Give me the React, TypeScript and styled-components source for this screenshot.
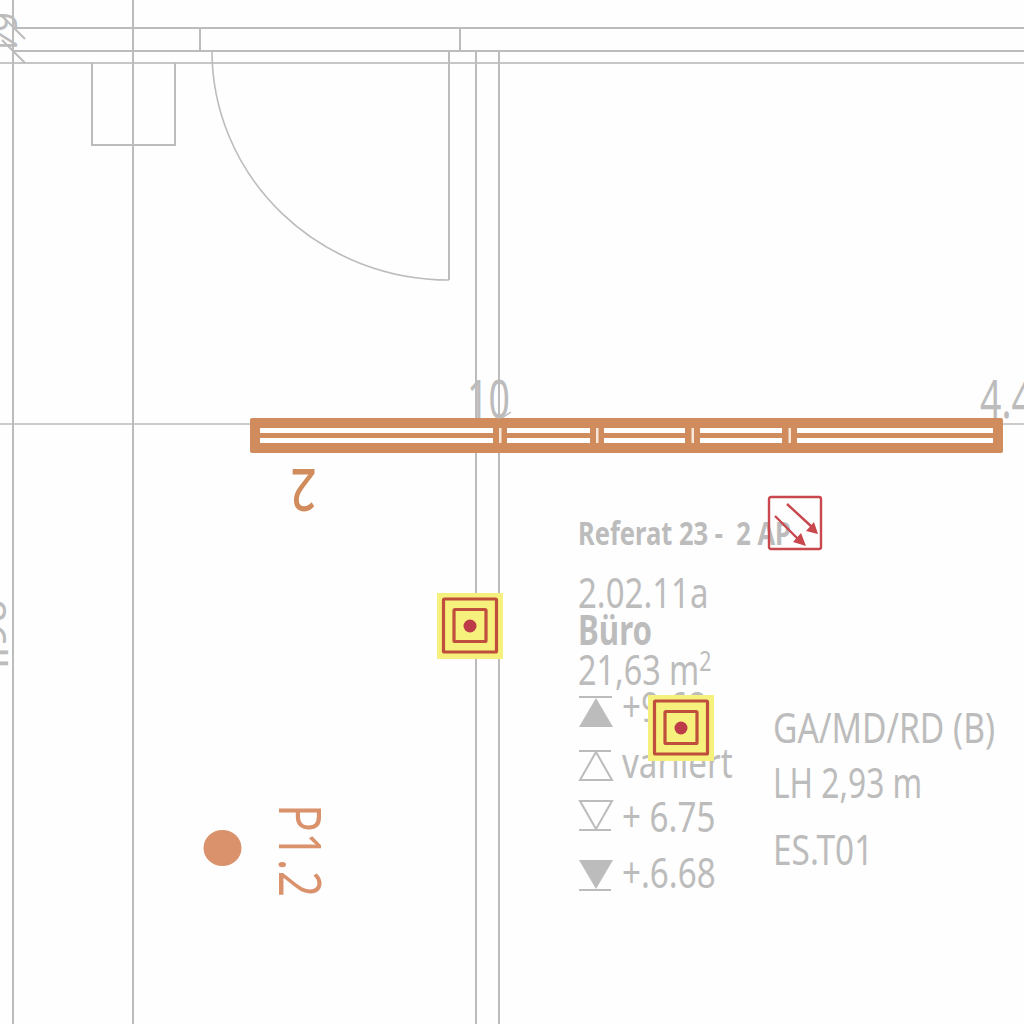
import React from "react";
import styled, { createGlobalStyle } from "styled-components";

const Global = createGlobalStyle`
  html, body { margin: 0; padding: 0; background: #fefefe; }
`;

const GREY = "#bcbcbc";
const ORANGE = "#d08c5c";
const TEXT_FONT = `"Noto Sans", "Open Sans", sans-serif`;

const Canvas = styled.main`
  position: relative;
  width: 1024px;
  height: 1024px;
  overflow: hidden;
  background: #fefefe;
`;

const Drawing = styled.svg`
  position: absolute;
  inset: 0;
`;

const DimensionLabel = styled.span<{ $x: number }>`
  position: absolute;
  left: ${(p) => p.$x}px;
  top: 372px;
  font-family: ${TEXT_FONT};
  font-size: 52px;
  line-height: 1;
  white-space: nowrap;
  color: ${GREY};
  transform-origin: 0 0;
  transform: scaleX(0.72);
`;

const WallLabel = styled.span<{ $x: number; $y: number; $size: number; $sx: number }>`
  position: absolute;
  left: ${(p) => p.$x}px;
  top: ${(p) => p.$y}px;
  font-family: ${TEXT_FONT};
  font-size: ${(p) => p.$size}px;
  line-height: 1;
  white-space: nowrap;
  color: ${GREY};
  transform-origin: 0 0;
  transform: rotate(90deg) scaleX(${(p) => p.$sx});
`;

const TurnedNumber = styled.span`
  position: absolute;
  left: 288px;
  top: 462px;
  width: 32px;
  text-align: center;
  font-family: ${TEXT_FONT};
  font-size: 58px;
  font-weight: 500;
  line-height: 1;
  color: ${ORANGE};
  transform: rotate(180deg) scaleX(0.78);
`;

const PointLabel = styled.span`
  position: absolute;
  left: 330px;
  top: 804px;
  font-family: "Open Sans", sans-serif;
  font-size: 58px;
  line-height: 1;
  white-space: nowrap;
  color: #d9926c;
  transform-origin: 0 0;
  transform: rotate(90deg) scaleX(0.8);
`;

/* Room stamp: the text block of the room, set in flow */
const RoomStamp = styled.section`
  position: absolute;
  left: 578px;
  top: 516px;
  display: flex;
  flex-direction: column;
  width: 200px;
`;

const StampLine = styled.div<{ $h: number; $size?: number; $sx?: number; $bold?: boolean }>`
  height: ${(p) => p.$h}px;
  font-family: ${TEXT_FONT};
  font-size: ${(p) => p.$size ?? 42}px;
  font-weight: ${(p) => (p.$bold ? 700 : 400)};
  line-height: 1;
  white-space: nowrap;
  color: ${GREY};
  transform-origin: 0 0;
  transform: scaleX(${(p) => p.$sx ?? 0.79});
`;

const Superscript = styled.sup`
  font-size: 0.66em;
  line-height: 0;
  vertical-align: 0.5em;
`;

const LevelRow = styled.div<{ $h: number }>`
  display: flex;
  align-items: flex-start;
  gap: 8px;
  height: ${(p) => p.$h}px;
`;

const LevelIcon = styled.svg<{ $drop: number }>`
  flex: none;
  margin-top: ${(p) => p.$drop}px;
`;

const LevelText = styled.span`
  font-family: ${TEXT_FONT};
  font-size: 42px;
  line-height: 1;
  white-space: nowrap;
  color: ${GREY};
  transform-origin: 0 0;
  transform: scaleX(0.79);
`;

const RoomUse = styled.section`
  position: absolute;
  left: 773px;
  top: 706px;
  display: flex;
  flex-direction: column;
`;

const MarkerBox = styled.svg<{ $x: number; $y: number }>`
  position: absolute;
  left: ${(p) => p.$x}px;
  top: ${(p) => p.$y}px;
`;

const Marker = ({ x, y }: { x: number; y: number }) => (
  <MarkerBox $x={x} $y={y} width={66} height={66} viewBox="0 0 66 66">
    <rect width="66" height="66" fill="#f6f07c" />
    <rect x="6.5" y="6" width="53" height="53" rx="1" fill="none" stroke="#bf4e3d" strokeWidth="3.2" />
    <rect x="17" y="16.5" width="32" height="32" rx="1" fill="none" stroke="#bf4e3d" strokeWidth="3.2" />
    <circle cx="33" cy="33" r="6.5" fill="#bd3a48" />
  </MarkerBox>
);

const ExhaustSign = () => (
  <MarkerBox $x={767} $y={495} width={56} height={56} viewBox="0 0 56 56">
    <g fill="none" stroke="#c8484e" strokeWidth="2.4">
      <rect x="2" y="2" width="52" height="52" rx="2" />
      <path d="M20 9L45 32M8 21L31 44" />
    </g>
    <path d="M51 39L39 36L47 27ZM39 51L26 47L34 38Z" fill="#c8484e" />
  </MarkerBox>
);

const levelShapes = {
  filledUp: (
    <>
      <path d="M1 1H34" stroke={GREY} strokeWidth="2" />
      <path d="M18 2L35 31H1Z" fill={GREY} />
    </>
  ),
  hollowUp: (
    <>
      <path d="M1 1H33" stroke={GREY} strokeWidth="2" />
      <path d="M18 2L34 30H2Z" fill="none" stroke={GREY} strokeWidth="2" />
    </>
  ),
  hollowDown: (
    <>
      <path d="M2 2H34L18 30Z" fill="none" stroke={GREY} strokeWidth="2" />
      <path d="M1 31H33" stroke={GREY} strokeWidth="2" />
    </>
  ),
  filledDown: (
    <>
      <path d="M1 1H35L18 30Z" fill={GREY} />
      <path d="M1 31H33" stroke={GREY} strokeWidth="2" />
    </>
  ),
};

const Level = ({ h, drop, shape, children }: { h: number; drop: number; shape: keyof typeof levelShapes; children: React.ReactNode }) => (
  <LevelRow $h={h}>
    <LevelIcon $drop={drop} width={36} height={33} viewBox="0 0 36 33">
      {levelShapes[shape]}
    </LevelIcon>
    <LevelText>{children}</LevelText>
  </LevelRow>
);

const slots: [number, number][] = [[260, 493], [507, 590], [604, 685], [700, 782], [797, 993]];
const dividers = [500, 597, 692.5, 789.5];

const App = () => (
  <Canvas>
    <Global />
    <Drawing width={1024} height={1024} viewBox="0 0 1024 1024">
      <g stroke={GREY} strokeWidth="2" fill="none">
        <path d="M13 0V1024M133 0V1024M476 51V1024M499 51V1024M449 51V280" />
        <path d="M13 28H1024M13 51H1024M200 28V51M460 28V51" />
        <path d="M0 63H1024" strokeOpacity="0.85" />
        <path d="M0 424H250M1000 424H1024" strokeWidth="1.5" />
        <path d="M92 63V145H175V63" />
        <path d="M212 51A237 229 0 0 0 449 280" strokeWidth="1.6" />
        <path d="M2 16L25 39M2 40L25 63" />
        <path d="M465 433L476 425M499 420L511 412" strokeWidth="1.5" />
      </g>
      <rect x="250" y="418" width="753" height="35" rx="2" fill={ORANGE} />
      {slots.map(([a, b]) => (
        <g key={a} fill="#fefefe">
          <rect x={a} y="428" width={b - a} height="5" />
          <rect x={a} y="438" width={b - a} height="5" />
        </g>
      ))}
      {dividers.map((x) => (
        <rect key={x} x={x - 1} y="428" width="2.5" height="15" fill="#f7e7db" />
      ))}
      <ellipse cx="222.5" cy="848" rx="19" ry="18" fill="#d9926c" />
    </Drawing>

    <WallLabel $x={24} $y={12} $size={38} $sx={0.9}>64</WallLabel>
    <WallLabel $x={13} $y={599} $size={42} $sx={1}>86ll</WallLabel>

    <DimensionLabel $x={467}>10</DimensionLabel>
    <DimensionLabel $x={980}>4.4</DimensionLabel>
    <TurnedNumber>2</TurnedNumber>
    <PointLabel>P1.2</PointLabel>

    <RoomStamp>
      <StampLine $h={55} $size={33} $sx={0.773} $bold>Referat 23 -&nbsp;&nbsp;2 AP</StampLine>
      <StampLine $h={37} $sx={0.785}>2.02.11a</StampLine>
      <StampLine $h={40} $sx={0.745} $bold>Büro</StampLine>
      <StampLine $h={37} $sx={0.77}>21,63 m<Superscript>2</Superscript></StampLine>
      <Level h={56} drop={11} shape="filledUp">+9.68</Level>
      <Level h={54} drop={9} shape="hollowUp">variiert</Level>
      <Level h={56} drop={4} shape="hollowDown">+ 6.75</Level>
      <Level h={40} drop={8} shape="filledDown">+.6.68</Level>
    </RoomStamp>

    <RoomUse>
      <StampLine $h={55} $sx={0.8}>GA/MD/RD (B)</StampLine>
      <StampLine $h={67} $sx={0.755}>LH 2,93 m</StampLine>
      <StampLine $h={40} $sx={0.795}>ES.T01</StampLine>
    </RoomUse>

    <ExhaustSign />
    <Marker x={437} y={593} />
    <Marker x={647.5} y={695} />
  </Canvas>
);

export default App;
